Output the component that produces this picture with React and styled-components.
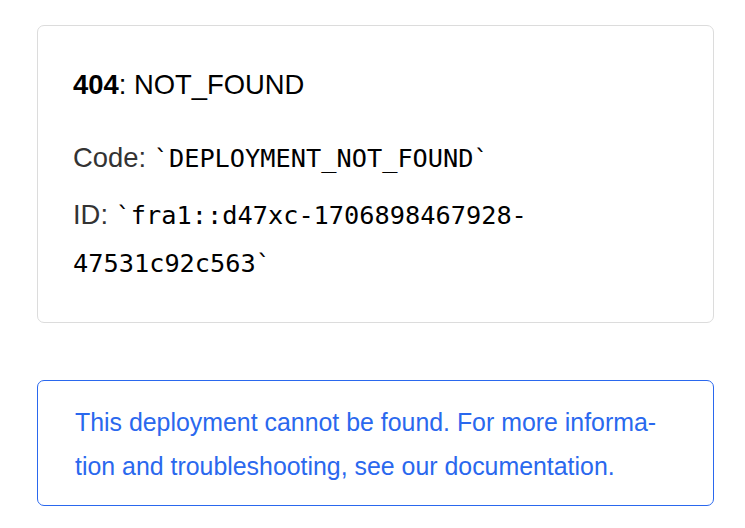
import React from 'react'
import styled, { createGlobalStyle } from 'styled-components'

const GlobalStyle = createGlobalStyle`
  html, body {
    margin: 0;
    padding: 0;
    background: #ffffff;
  }
  body {
    font-family: "Liberation Sans", Arial, sans-serif;
    -webkit-font-smoothing: antialiased;
  }
`;

const Page = styled.main`
  padding: 25px 32px 0 37px;
  width: 677px;
`;

const InfoCard = styled.div`
  display: flex;
  flex-direction: column;
  border: 1px solid #dcdcdc;
  border-radius: 7px;
  padding: 36px 35px 35px 35px;
  margin-bottom: 57px;
`;

const ErrorCode = styled.span`
  display: block;
  font-size: 27.4px;
  line-height: 46px;
  color: #000;
  margin-bottom: 26px;
  strong {
    font-weight: 700;
  }
`;

const InfoLine = styled.span`
  display: block;
  font-size: 27.4px;
  line-height: 48px;
  color: #333;
  & + & {
    margin-top: 9px;
  }
`;

const Code = styled.code`
  font-family: "DejaVu Sans Mono", Menlo, monospace;
  font-size: 25.3px;
  line-height: 1;
  color: #000;
  word-break: break-word;
`;

const Note = styled.a`
  display: block;
  border: 1px solid #2a68ee;
  border-radius: 7px;
  padding: 19px 37px 17px;
  font-size: 24.9px;
  line-height: 44px;
  color: #2a68ee;
  text-decoration: none;
`;

function App() {
  return (
    <>
      <GlobalStyle />
      <Page>
        <InfoCard>
          <ErrorCode><strong>404</strong>: NOT_FOUND</ErrorCode>
          <InfoLine>Code: <Code>`DEPLOYMENT_NOT_FOUND`</Code></InfoLine>
          <InfoLine>ID: <Code>`fra1::d47xc-1706898467928-47531c92c563`</Code></InfoLine>
        </InfoCard>
        <Note href="#">
          This deployment cannot be found. For more informa{'\u00AD'}tion and troubleshooting, see our documentation.
        </Note>
      </Page>
    </>
  )
}

export default App
